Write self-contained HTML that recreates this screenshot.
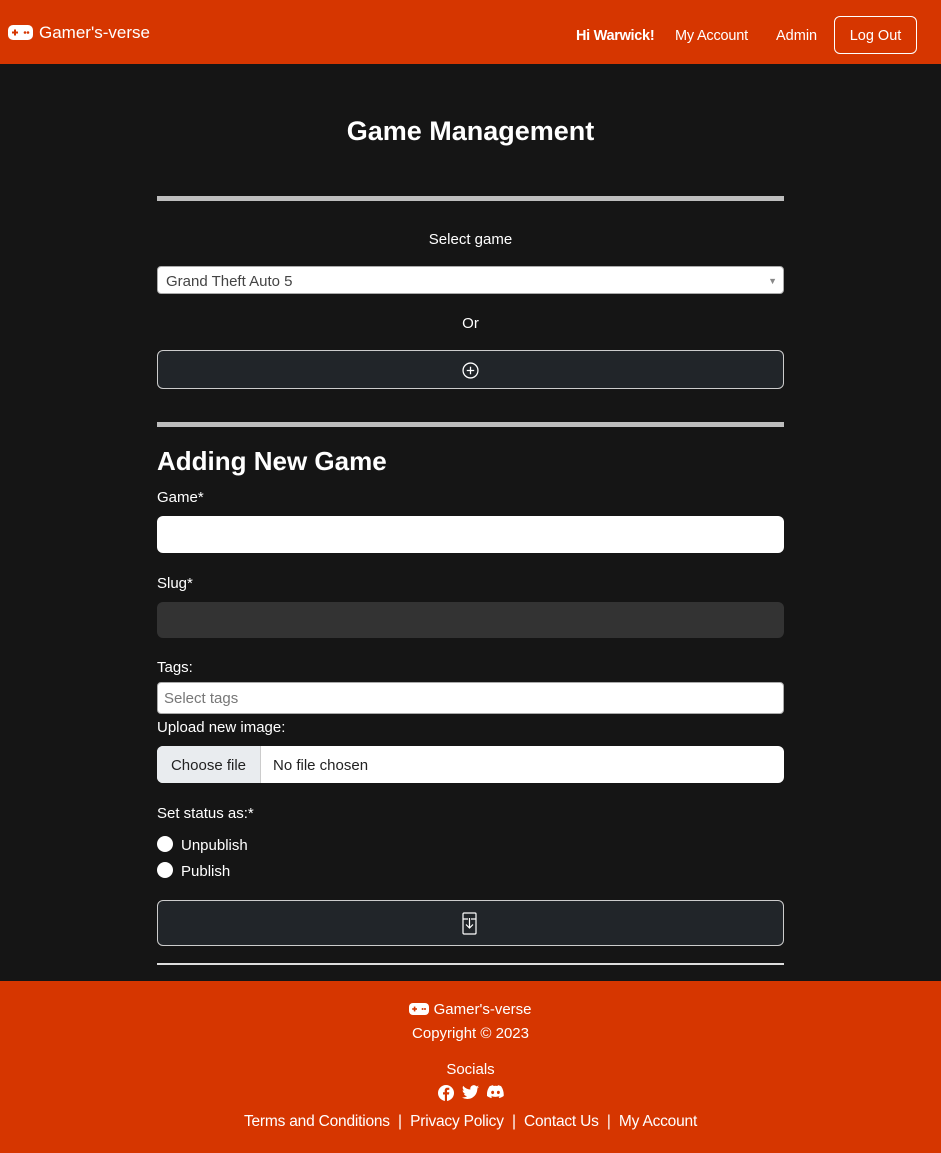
<!DOCTYPE html>
<html><head><style>
body{margin:0;background:#151515;font-family:"Liberation Sans",sans-serif;color:#fff;font-size:15px;width:941px;height:1153px;overflow:hidden;position:relative}
.a{position:absolute}
.nav{top:0;left:0;width:941px;height:64px;background:#d63600}
.c{left:157px;width:627px}
.ctr{text-align:center}
</style></head><body>
<div class="a nav">
 <svg class="a" style="left:8px;top:25px" width="25" height="15" viewBox="0 0 25 15"><rect x="0" y="0" width="25" height="15" rx="5" fill="#fff"/><rect x="4" y="6.5" width="6" height="2" fill="#d63600"/><rect x="6" y="4.5" width="2" height="6" fill="#d63600"/><circle cx="17" cy="7.5" r="1.3" fill="#d63600"/><circle cx="20" cy="7.5" r="1.3" fill="#d63600"/></svg>
 <div class="a" style="left:39px;top:23px;font-size:17px">Gamer's-verse</div>
 <div class="a" style="left:576px;top:28px;font-weight:bold;font-size:14.5px;letter-spacing:-0.3px">Hi Warwick!</div>
 <div class="a" style="left:675px;top:28px;font-size:14.5px;letter-spacing:-0.2px">My Account</div>
 <div class="a" style="left:776px;top:28px;font-size:14.5px">Admin</div>
 <div class="a" style="left:834px;top:16px;width:81px;height:36px;border:1px solid #fff;border-radius:6px;text-align:center;line-height:38px;font-size:14.5px">Log Out</div>
</div>
<div class="a c ctr" style="top:116px;font-size:27px;font-weight:bold">Game Management</div>
<div class="a c" style="top:196px;height:5px;background:#bdbdbd"></div>
<div class="a c ctr" style="top:231px">Select game</div>
<div class="a c" style="top:266px;height:28px;background:#fff;border:1px solid #aaa;border-radius:4px;box-sizing:border-box;color:#444;font-size:15px;line-height:29px;padding-left:8px">Grand Theft Auto 5<span style="position:absolute;right:6px;top:0;font-size:9px;color:#888">▼</span></div>
<div class="a c ctr" style="top:315px">Or</div>
<div class="a c" style="top:350px;height:39px;background:#212529;border:1px solid #ccc;border-radius:6px;box-sizing:border-box">
 <svg class="a" style="left:304px;top:11px" width="17" height="17" viewBox="0 0 16 16" fill="none" stroke="#fff" stroke-width="1.2"><circle cx="8" cy="8" r="7"/><path d="M8 4.5v7M4.5 8h7"/></svg>
</div>
<div class="a c" style="top:422px;height:5px;background:#bdbdbd"></div>
<div class="a c" style="top:446px;font-size:26px;font-weight:bold">Adding New Game</div>
<div class="a c" style="top:489px">Game*</div>
<div class="a c" style="top:516px;height:37px;background:#fff;border-radius:6px"></div>
<div class="a c" style="top:575px">Slug*</div>
<div class="a c" style="top:602px;height:36px;background:#333;border-radius:6px"></div>
<div class="a c" style="top:659px">Tags:</div>
<div class="a c" style="top:682px;height:32px;background:#fff;border:1px solid #aaa;border-radius:4px;box-sizing:border-box;color:#777;font-size:15px;line-height:31px;padding-left:6px">Select tags</div>
<div class="a c" style="top:719px">Upload new image:</div>
<div class="a c" style="top:746px;height:37px;background:#fff;border-radius:6px;overflow:hidden;color:#222;font-size:15px;line-height:39px">
 <span class="a" style="left:0;top:0;width:103px;height:37px;background:#e9ecef;border-right:1px solid #ccc;text-align:center">Choose file</span>
 <span class="a" style="left:116px">No file chosen</span>
</div>
<div class="a c" style="top:805px">Set status as:*</div>
<div class="a" style="left:157px;top:836px;width:16px;height:16px;border-radius:50%;background:#fff"></div>
<div class="a" style="left:181px;top:837px">Unpublish</div>
<div class="a" style="left:157px;top:862px;width:16px;height:16px;border-radius:50%;background:#fff"></div>
<div class="a" style="left:181px;top:863px">Publish</div>
<div class="a c" style="top:900px;height:46px;background:#212529;border:1px solid #ccc;border-radius:6px;box-sizing:border-box">
 <svg class="a" style="left:304px;top:11px" width="16" height="23" viewBox="0 0 16 23" fill="none" stroke="#fff" stroke-width="1.2"><rect x="1" y="1" width="13" height="21" rx="1"/><path d="M7.5 6v10M4 12.5l3.5 3.5 3.5-3.5M1 7h5M9 7h5"/></svg>
</div>
<div class="a c" style="top:963px;height:2px;background:#ddd"></div>
<div class="a" style="left:0;top:981px;width:941px;height:172px;background:#d63600;font-size:15px">
 <div class="a ctr" style="left:0;width:941px;top:20px"><svg width="20" height="12" viewBox="0 0 25 15" style="vertical-align:-1px"><rect width="25" height="15" rx="5" fill="#fff"/><rect x="4" y="6.5" width="6" height="2" fill="#d63600"/><rect x="6" y="4.5" width="2" height="6" fill="#d63600"/><circle cx="17" cy="7.5" r="1.3" fill="#d63600"/><circle cx="20" cy="7.5" r="1.3" fill="#d63600"/></svg> Gamer's-verse</div>
 <div class="a ctr" style="left:0;width:941px;top:44px">Copyright © 2023</div>
 <div class="a ctr" style="left:0;width:941px;top:80px">Socials</div>
 <div class="a" style="left:438px;top:104px;display:flex;gap:8px">
  <svg width="16" height="16" viewBox="0 0 16 16"><circle cx="8" cy="8" r="8" fill="#fff"/><path d="M9 16V9.5h2l.3-2.3H9V6c0-.7.2-1.1 1.1-1.1h1.2V2.8c-.3 0-1-.1-1.8-.1-1.7 0-2.8 1-2.8 2.9v1.6H5v2.3h1.9V16z" fill="#d63600"/></svg>
  <svg width="17" height="15" viewBox="0 0 16 14"><path d="M16 1.7a6.6 6.6 0 0 1-1.9.5A3.3 3.3 0 0 0 15.6.4a6.6 6.6 0 0 1-2.1.8A3.3 3.3 0 0 0 7.9 4.2 9.3 9.3 0 0 1 1.1.8a3.3 3.3 0 0 0 1 4.4 3.3 3.3 0 0 1-1.5-.4 3.3 3.3 0 0 0 2.6 3.2 3.3 3.3 0 0 1-1.5.1 3.3 3.3 0 0 0 3.1 2.3A6.6 6.6 0 0 1 0 11.7 9.3 9.3 0 0 0 5 13.1c6 0 9.4-5 9.4-9.4v-.4A6.7 6.7 0 0 0 16 1.7z" fill="#fff"/></svg>
  <svg width="17" height="14" viewBox="0 0 16 13"><path d="M13.5 1.1A13 13 0 0 0 10.3 0l-.4.8a12 12 0 0 0-3.8 0L5.7 0a13 13 0 0 0-3.3 1.1C.3 4.2-.3 7.3 0 10.3a13 13 0 0 0 4 2l.8-1.4a8 8 0 0 1-1.3-.6l.3-.2a9.4 9.4 0 0 0 8 0l.3.2a8 8 0 0 1-1.3.6l.9 1.4a13 13 0 0 0 4-2c.3-3.5-.6-6.5-2.4-9.2zM5.3 8.5c-.8 0-1.4-.7-1.4-1.6s.6-1.6 1.4-1.6 1.5.7 1.4 1.6c0 .9-.6 1.6-1.4 1.6zm5.4 0c-.8 0-1.4-.7-1.4-1.6s.6-1.6 1.4-1.6 1.5.7 1.4 1.6c0 .9-.6 1.6-1.4 1.6z" fill="#fff"/></svg>
 </div>
 <div class="a ctr" style="left:0;width:941px;top:132px;font-size:15.5px;letter-spacing:-0.2px">Terms and Conditions &nbsp;|&nbsp; Privacy Policy &nbsp;|&nbsp; Contact Us &nbsp;|&nbsp; My Account</div>
</div>
</body></html>
